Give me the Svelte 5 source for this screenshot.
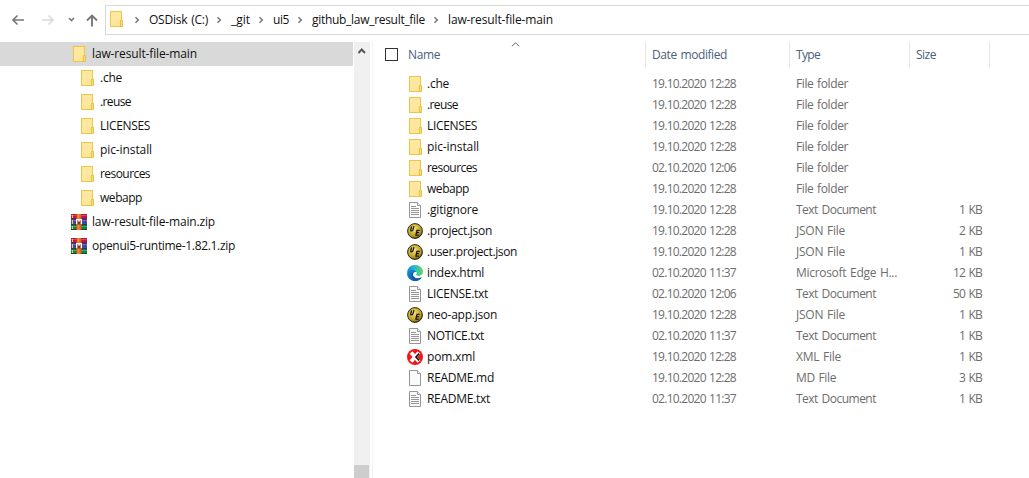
<script>
  const crumbs = [
    { name: 'OSDisk (C:)', width: 59, gap: 8 },
    { name: '_git', width: 19, gap: 8 },
    { name: 'ui5', width: 16, gap: 8 },
    { name: 'github_law_result_file', width: 113, gap: 8 },
    { name: 'law-result-file-main', width: 105, gap: 8 }
  ];

  const tree = [
    { name: 'law-result-file-main', icon: 'folder', width: 105, selected: true },
    { name: '.che', icon: 'folder', width: 22, child: true },
    { name: '.reuse', icon: 'folder', width: 31, child: true },
    { name: 'LICENSES', icon: 'folder', width: 50, child: true },
    { name: 'pic-install', icon: 'folder', width: 52, child: true },
    { name: 'resources', icon: 'folder', width: 50, child: true },
    { name: 'webapp', icon: 'folder', width: 42, child: true },
    { name: 'law-result-file-main.zip', icon: 'zip', width: 123 },
    { name: 'openui5-runtime-1.82.1.zip', icon: 'zip', width: 143 }
  ];

  const late = '19.10.2020 12:28';
  const noon = '02.10.2020 12:06';
  const early = '02.10.2020 11:37';
  const files = [
    ['.che', 'folder', late, 'File folder', '', 22],
    ['.reuse', 'folder', late, 'File folder', '', 31],
    ['LICENSES', 'folder', late, 'File folder', '', 50],
    ['pic-install', 'folder', late, 'File folder', '', 52],
    ['resources', 'folder', noon, 'File folder', '', 50],
    ['webapp', 'folder', late, 'File folder', '', 42],
    ['.gitignore', 'text', late, 'Text Document', '1 KB', 51],
    ['.project.json', 'ue', late, 'JSON File', '2 KB', 65],
    ['.user.project.json', 'ue', late, 'JSON File', '1 KB', 90],
    ['index.html', 'edge', early, 'Microsoft Edge H...', '12 KB', 57],
    ['LICENSE.txt', 'text', noon, 'Text Document', '50 KB', 61],
    ['neo-app.json', 'ue', late, 'JSON File', '1 KB', 70],
    ['NOTICE.txt', 'text', early, 'Text Document', '1 KB', 57],
    ['pom.xml', 'xml', late, 'XML File', '1 KB', 48],
    ['README.md', 'blank', late, 'MD File', '3 KB', 67],
    ['README.txt', 'text', early, 'Text Document', '1 KB', 63]
  ];
  const typeWidths = {
    'File folder': 52, 'Text Document': 80, 'JSON File': 49,
    'Microsoft Edge H...': 101, 'XML File': 45, 'MD File': 40
  };

  // Spreads letters so that a label takes up the given width.
  function fit(node, width) {
    const natural = node.getBoundingClientRect().width;
    node.style.letterSpacing = `${(width - natural) / node.textContent.length}px`;
  }
</script>

{#snippet icon(kind)}
  <svg class="icon" width="16" height="16" viewBox="0 0 16 16">
    {#if kind === 'folder'}
      <rect x="2.5" y=".5" width="11" height="15" fill="#ffe494" stroke="#ecc64c" />
      <path d="M3 1h10v9L3 15z" fill="#ffe9a6" opacity=".6" />
      <path d="M12.5 9.5h2v6h-2z" fill="#ffe08a" stroke="#e8be3d" />
    {:else if kind === 'text' || kind === 'blank'}
      <path d="M2.5.5h8l3 3v12h-11z" fill="#fafafa" stroke="#969696" />
      <path d="M10.5.5v3h3" fill="#fff" stroke="#969696" />
      {#if kind === 'text'}
        <path d="M4 4.5h5M4 6.5h8M4 8.5h8M4 10.5h8M4 12.5h8" stroke="#979797" />
      {/if}
    {:else if kind === 'ue'}
      <defs>
        <radialGradient id="gold" cx=".42" cy=".36" r=".68">
          <stop offset="0" stop-color="#f3e6a0" />
          <stop offset=".4" stop-color="#d8bc3c" />
          <stop offset=".75" stop-color="#b3951f" />
          <stop offset="1" stop-color="#3a3310" />
        </radialGradient>
      </defs>
      <circle cx="8" cy="8" r="7.4" fill="url(#gold)" stroke="#2b2a22" stroke-width="1" />
      <path d="M4.6 3.4 3.8 6.6q-.3 1.3.8 1.2 1.1-.1 1.4-1.2L6.9 3.2" fill="none" stroke="#1b180c" stroke-width="1.3" />
      <path d="M12.7 7.3H10L8.9 12.2h2.9M9.5 9.7h2.6" fill="none" stroke="#1b180c" stroke-width="1.3" />
    {:else if kind === 'edge'}
      <defs>
        <linearGradient id="edge-top" x1="0" x2="1">
          <stop offset="0" stop-color="#168cce" />
          <stop offset=".45" stop-color="#25b9ca" />
          <stop offset="1" stop-color="#62d957" />
        </linearGradient>
        <linearGradient id="edge-left" y2="1">
          <stop offset="0" stop-color="#168bd8" />
          <stop offset="1" stop-color="#0c59a4" />
        </linearGradient>
      </defs>
      <path d="M.2 7.8C0 3.4 3.6 0 8 0c4.9 0 8 3.5 8 6.8 0 2.6-1.9 4.1-4.3 4.1-1.7 0-2.8-.6-2.5-1.3 1.6-2-.2-4.6-3.3-4.6C3.1 5 .8 6.1.2 7.8z" fill="url(#edge-top)" />
      <path d="M.1 8.2C.4 5.8 2.7 4.7 5.3 4.8 7.7 4.8 9.2 6 9.4 7.3 7.2 6.5 5.7 8.4 6 10.4c.4 2.8 4.8 4.4 8.7 1.8C13.3 14.5 11 16 8 16 3.5 16-.2 12.5.1 8.2z" fill="url(#edge-left)" />
      <path d="M5.3 7.7C3 10.2 5.1 15 8.7 16c2.5-.1 4.7-1.5 6-3.8-3.9 2.4-8.7.8-8.8-2.6 0-1 .5-1.7 1.1-2.3z" fill="#1259ad" />
    {:else if kind === 'xml'}
      <circle cx="8" cy="8" r="8" fill="#f51414" />
      <path d="m4 3.4 8 9.2M12 3.4 4 12.6" stroke="#fff" stroke-width="3.8" />
      <path d="M12.2 4.6 9 8l3.2 3.4" fill="none" stroke="#161616" stroke-width="1.7" />
    {:else}
      <path fill="#b8154a" d="M0 0h16v5H0z" />
      <path fill="#4349a8" d="M0 5h16v6H0z" />
      <path fill="#0c8a38" d="M0 11h16v5H0z" />
      <path fill="#dc3d69" d="M0 1h16v1H0z" />
      <path fill="#6b70c6" d="M0 6h16v1H0z" />
      <path fill="#2dac50" d="M0 12h16v1H0z" />
      <path d="M0 5h16M0 10.7h16M0 15.6h16" stroke="#2d2334" stroke-width=".8" />
      <path d="M1.5 1v3m0 2v4m0 2v3" stroke="#f5ce35" />
      <path fill="#e2601b" d="M5.5 0h5v16h-5z" />
      <path fill="#f28a3a" d="M6.5 0h2v16h-2z" />
      <path fill="#8a2d1c" d="M5 5h6v5.5H5z" />
      <path d="M5.7 10.2V5.6h4.6v4.6M8 5.6v2.2" fill="none" stroke="#fff" stroke-width="1.4" />
    {/if}
  </svg>
{/snippet}

<main>
  <nav>
    <div class="controls">
      <svg width="105" height="40" viewBox="0 0 105 40" fill="none">
        <path d="M24 20H13M17.5 15.5 13 20l4.5 4.5" stroke="#777" stroke-width="1.6" />
        <path d="M42 20h11M48.5 15.5 53 20l-4.5 4.5" stroke="#d9d9d9" stroke-width="1.6" />
        <path d="m69 18 2.5 2.5L74 18" stroke="#777" stroke-width="1.6" />
        <path d="M92 26.5V16M87 20.5l5-5 5 5" stroke="#777" stroke-width="1.9" />
      </svg>
    </div>
    <div class="address">
      {@render icon('folder')}
      <div class="crumbs">
        {#each crumbs as crumb}
          <svg class="chevron" width="6" height="8" viewBox="0 0 6 8" fill="none">
            <path d="m1.5 1.2 2.8 2.8-2.8 2.8" stroke="#777" stroke-width="1.5" />
          </svg>
          <span class="crumb" style:width="{crumb.width + crumb.gap}px"><span use:fit={crumb.width}>{crumb.name}</span></span>
        {/each}
      </div>
    </div>
  </nav>

  <div class="body">
    <aside>
      {#each tree as item}
        <div class="node" class:selected={item.selected} class:child={item.child}>
          {@render icon(item.icon)}<span use:fit={item.width}>{item.name}</span>
        </div>
      {/each}
    </aside>
    <div class="scrollbar">
      <svg width="16" height="17" viewBox="0 0 16 17" fill="none">
        <path d="m4.5 11 3.2-3.5 3.3 3.5" stroke="#555" stroke-width="1.9" />
      </svg>
      <div class="thumb"></div>
    </div>
    <section>
      <header>
        <div class="head name-head">
          <i class="checkbox"></i><span use:fit={32}>Name</span>
          <svg class="sort" width="9" height="5" viewBox="0 0 9 5" fill="none"><path d="m.8 4.3 3.7-3.5 3.7 3.5" stroke="#666" /></svg>
        </div>
        <div class="head date"><span use:fit={75}>Date modified</span></div>
        <div class="head type"><span use:fit={24}>Type</span></div>
        <div class="head size-head"><span use:fit={20}>Size</span></div>
      </header>
      <div class="files">
        {#each files as [name, kind, date, type, size, width]}
          <div class="file">
            {@render icon(kind)}
            <div class="name"><span use:fit={width}>{name}</span></div>
            <div class="date"><span use:fit={84}>{date}</span></div>
            <div class="type"><span use:fit={typeWidths[type]}>{type}</span></div>
            <div class="size">{#if size}<span use:fit={size.length === 5 ? 29 : 23}>{size}</span>{/if}</div>
          </div>
        {/each}
      </div>
    </section>
  </div>
</main>

<style>
  :global(body) { margin: 0; overflow: hidden; background: #fff; }
  main {
    width: 1029px; height: 478px; overflow: hidden;
    font: 12px/20px "Open Sans", "Noto Sans", sans-serif;
    word-spacing: 1px;
    color: #111; white-space: nowrap;
  }
  svg { display: block; flex: none; }
  span { display: inline-block; }
  nav { display: flex; height: 42px; }
  .controls { width: 105px; }
  .address {
    display: flex; align-items: center; box-sizing: border-box;
    width: 924px; height: 30px; margin-top: 5px; padding-left: 2px;
    border: 1px solid #d9d9d9; border-right: 0;
  }
  .address > .icon { margin-bottom: 2px; }
  .crumbs { display: flex; align-items: center; padding-left: 10px; }
  .chevron { margin-right: 9px; }
  .crumb { display: block; }
  .body { display: flex; height: 436px; }
  aside { width: 353px; }
  .node { display: flex; align-items: center; box-sizing: border-box; height: 24px; padding-left: 71px; gap: 5px; }
  .node.child { padding-left: 79px; }
  .node.selected { background: #d9d9d9; }
  .scrollbar {
    display: flex; flex-direction: column; justify-content: space-between;
    width: 16px; margin-left: 1px; background: #f0f0f0;
  }
  .thumb { width: 15px; height: 13px; background: #cdcdcd; }
  section { width: 656px; margin-left: 2px; border-left: 1px solid #f3f3f3; }
  header { display: flex; height: 25px; color: #4c607a; }
  .head { display: flex; align-items: center; box-sizing: border-box; height: 25px; border-right: 1px solid #e5e5e5; }
  .name-head { position: relative; width: 273px; padding-left: 12px; }
  .checkbox { box-sizing: border-box; width: 13px; height: 13px; margin-right: 10px; border: 1px solid #333; }
  .sort { position: absolute; left: 138px; top: 0; }
  .date { box-sizing: border-box; width: 144px; padding-left: 6px; }
  .type { box-sizing: border-box; width: 120px; padding-left: 6px; }
  .size-head { width: 80px; padding-left: 6px; }
  .files { padding: 6px 0 0 34px; color: #6d6d6d; }
  .file { display: flex; align-items: center; height: 21px; }
  .name { width: 219px; margin-left: 4px; color: #111; }
  .size { width: 72px; text-align: right; }
</style>
